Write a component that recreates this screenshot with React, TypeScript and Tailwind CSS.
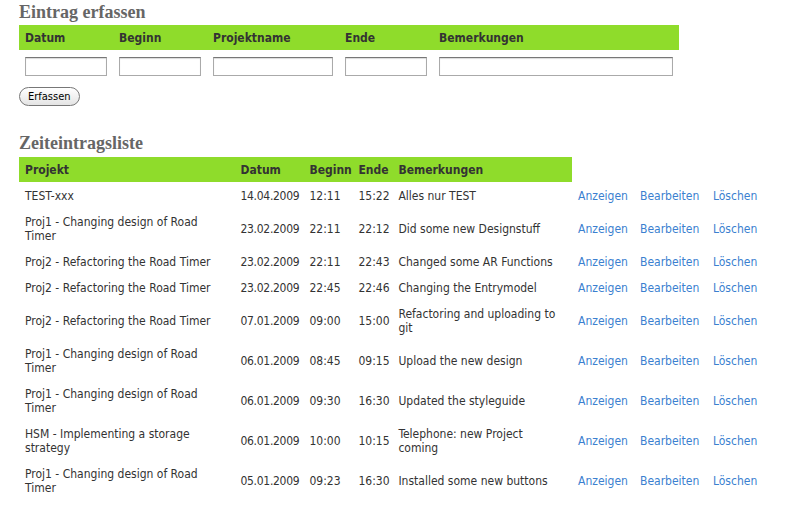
const entries = [
  { projekt: 'TEST-xxx', datum: '14.04.2009', beginn: '12:11', ende: '15:22', bem: 'Alles nur TEST' },
  { projekt: 'Proj1 - Changing design of Road Timer', datum: '23.02.2009', beginn: '22:11', ende: '22:12', bem: 'Did some new Designstuff' },
  { projekt: 'Proj2 - Refactoring the Road Timer', datum: '23.02.2009', beginn: '22:11', ende: '22:43', bem: 'Changed some AR Functions' },
  { projekt: 'Proj2 - Refactoring the Road Timer', datum: '23.02.2009', beginn: '22:45', ende: '22:46', bem: 'Changing the Entrymodel' },
  { projekt: 'Proj2 - Refactoring the Road Timer', datum: '07.01.2009', beginn: '09:00', ende: '15:00', bem: 'Refactoring and uploading to git' },
  { projekt: 'Proj1 - Changing design of Road Timer', datum: '06.01.2009', beginn: '08:45', ende: '09:15', bem: 'Upload the new design' },
  { projekt: 'Proj1 - Changing design of Road Timer', datum: '06.01.2009', beginn: '09:30', ende: '16:30', bem: 'Updated the styleguide' },
  { projekt: 'HSM - Implementing a storage strategy', datum: '06.01.2009', beginn: '10:00', ende: '10:15', bem: 'Telephone: new Project coming' },
  { projekt: 'Proj1 - Changing design of Road Timer', datum: '05.01.2009', beginn: '09:23', ende: '16:30', bem: 'Installed some new buttons' },
]

function Heading({ children }: { children: string }) {
  return (
    <h2 className="text-[18px] font-bold leading-6 text-[#666] [font-family:'Liberation_Serif',Georgia,serif]">
      {children}
    </h2>
  )
}

function Field({ w }: { w: string }) {
  return (
    <input
      className={`${w} h-[19px] border border-[#aaa] border-t-[#777] bg-white shadow-[inset_0_1px_1px_rgba(0,0,0,0.15)]`}
    />
  )
}

export default function App() {
  return (
    <div className="min-h-[511px] bg-white px-[19px] text-[12px] text-[#333] [font-family:'DejaVu_Sans_Condensed','DejaVu_Sans',sans-serif]">
      <Heading>Eintrag erfassen</Heading>

      <table className="mt-[1px] w-[660px] border-collapse">
        <thead>
          <tr className="h-[25px] bg-[#8fdc2b] text-left font-bold">
            <th className="w-[94px] pl-[6px] font-bold">Datum</th>
            <th className="w-[94px] pl-[6px] font-bold">Beginn</th>
            <th className="w-[132px] pl-[6px] font-bold">Projektname</th>
            <th className="w-[94px] pl-[6px] font-bold">Ende</th>
            <th className="pl-[6px] font-bold">Bemerkungen</th>
          </tr>
        </thead>
        <tbody>
          <tr className="h-[32px]">
            <td className="pl-[6px]"><Field w="w-[82px]" /></td>
            <td className="pl-[6px]"><Field w="w-[82px]" /></td>
            <td className="pl-[6px]"><Field w="w-[120px]" /></td>
            <td className="pl-[6px]"><Field w="w-[82px]" /></td>
            <td className="pl-[6px]"><Field w="w-[234px]" /></td>
          </tr>
        </tbody>
      </table>

      <button className="mt-[5px] h-[19px] rounded-full border border-[#777] bg-gradient-to-b from-white to-[#e4e4e4] px-[8px] text-[11px] leading-[15px] text-black">
        Erfassen
      </button>

      <div className="mt-[25px]">
        <Heading>Zeiteintragsliste</Heading>
      </div>

      <table className="mt-[2px] border-collapse">
        <thead>
          <tr className="h-[25px] text-left">
            <th className="w-[216px] bg-[#8fdc2b] pl-[6px] font-bold">Projekt</th>
            <th className="w-[69px] bg-[#8fdc2b] pl-[6px] font-bold">Datum</th>
            <th className="w-[49px] bg-[#8fdc2b] pl-[6px] font-bold">Beginn</th>
            <th className="w-[40px] bg-[#8fdc2b] pl-[6px] font-bold">Ende</th>
            <th className="w-[180px] bg-[#8fdc2b] pl-[6px] font-bold">Bemerkungen</th>
            <th className="w-[62px]"></th>
            <th className="w-[73px]"></th>
            <th className="w-[60px]"></th>
          </tr>
        </thead>
        <tbody>
          {entries.map((e, i) => (
            <tr key={i} className="leading-[14px]">
              <td className="pt-[7px] pb-[5px] pl-[6px] pr-[12px]">{e.projekt}</td>
              <td className="pt-[7px] pb-[5px] pl-[6px] tracking-[-0.3px]">{e.datum}</td>
              <td className="pt-[7px] pb-[5px] pl-[6px]">{e.beginn}</td>
              <td className="pt-[7px] pb-[5px] pl-[6px]">{e.ende}</td>
              <td className="pt-[7px] pb-[5px] pl-[6px] pr-[10px]">{e.bem}</td>
              <td className="pt-[7px] pb-[5px] pl-[6px] text-[#3b7fd0]">Anzeigen</td>
              <td className="pt-[7px] pb-[5px] pl-[6px] text-[#3b7fd0]">Bearbeiten</td>
              <td className="pt-[7px] pb-[5px] pl-[6px] text-[#3b7fd0]">Löschen</td>
            </tr>
          ))}
        </tbody>
      </table>
    </div>
  )
}
